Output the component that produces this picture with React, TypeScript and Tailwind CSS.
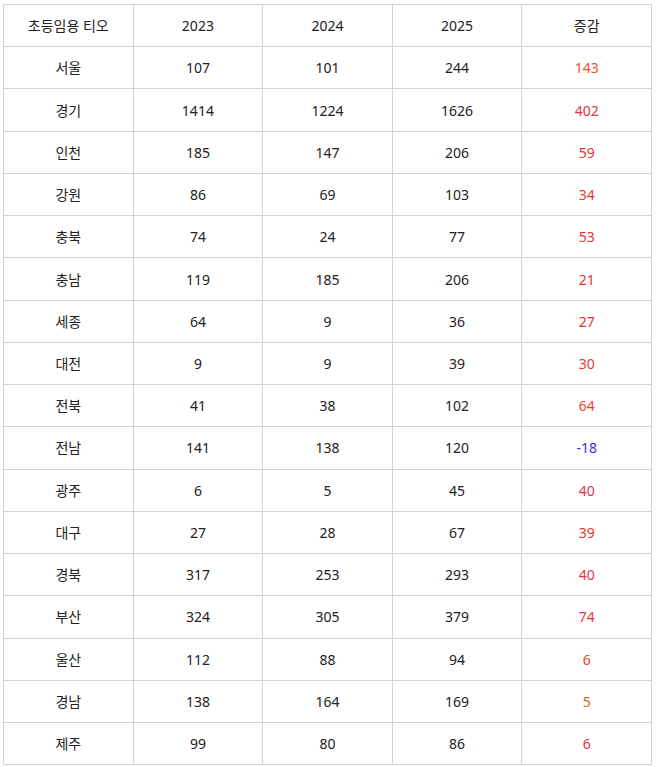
const rows: [string, number, number, number, number, string][] = [
  ['서울', 107, 101, 244, 143, 'text-[#e8542e]'],
  ['경기', 1414, 1224, 1626, 402, 'text-[#e33348]'],
  ['인천', 185, 147, 206, 59, 'text-[#e6332f]'],
  ['강원', 86, 69, 103, 34, 'text-[#e6402e]'],
  ['충북', 74, 24, 77, 53, 'text-[#e6332f]'],
  ['충남', 119, 185, 206, 21, 'text-[#e6332f]'],
  ['세종', 64, 9, 36, 27, 'text-[#e6332f]'],
  ['대전', 9, 9, 39, 30, 'text-[#e6402e]'],
  ['전북', 41, 38, 102, 64, 'text-[#e6452e]'],
  ['전남', 141, 138, 120, -18, 'text-[#3a2ee6]'],
  ['광주', 6, 5, 45, 40, 'text-[#e3334a]'],
  ['대구', 27, 28, 67, 39, 'text-[#e6332f]'],
  ['경북', 317, 253, 293, 40, 'text-[#e3334a]'],
  ['부산', 324, 305, 379, 74, 'text-[#e3334a]'],
  ['울산', 112, 88, 94, 6, 'text-[#e6452e]'],
  ['경남', 138, 164, 169, 5, 'text-[#cc6a1a]'],
  ['제주', 99, 80, 86, 6, 'text-[#e6332f]'],
];

const cell = 'border border-[#d3d3d3] h-[42.24px] p-0 text-center align-middle';

export default function App() {
  return (
    <div className="bg-white min-h-[767px] pt-[4px] pl-[3px] font-['Noto_Sans','Noto_Sans_CJK_KR',sans-serif] text-[14px] text-[#222]">
      <table className="w-[649px] table-fixed border-collapse">
        <thead>
          <tr>
            <td className={cell}>초등임용 티오</td>
            <td className={cell}>2023</td>
            <td className={cell}>2024</td>
            <td className={cell}>2025</td>
            <td className={cell}>증감</td>
          </tr>
        </thead>
        <tbody>
          {rows.map(([region, a, b, c, diff, color]) => (
            <tr key={region}>
              <td className={cell}>{region}</td>
              <td className={cell}>{a}</td>
              <td className={cell}>{b}</td>
              <td className={cell}>{c}</td>
              <td className={`${cell} ${color}`}>{diff}</td>
            </tr>
          ))}
        </tbody>
      </table>
    </div>
  );
}
